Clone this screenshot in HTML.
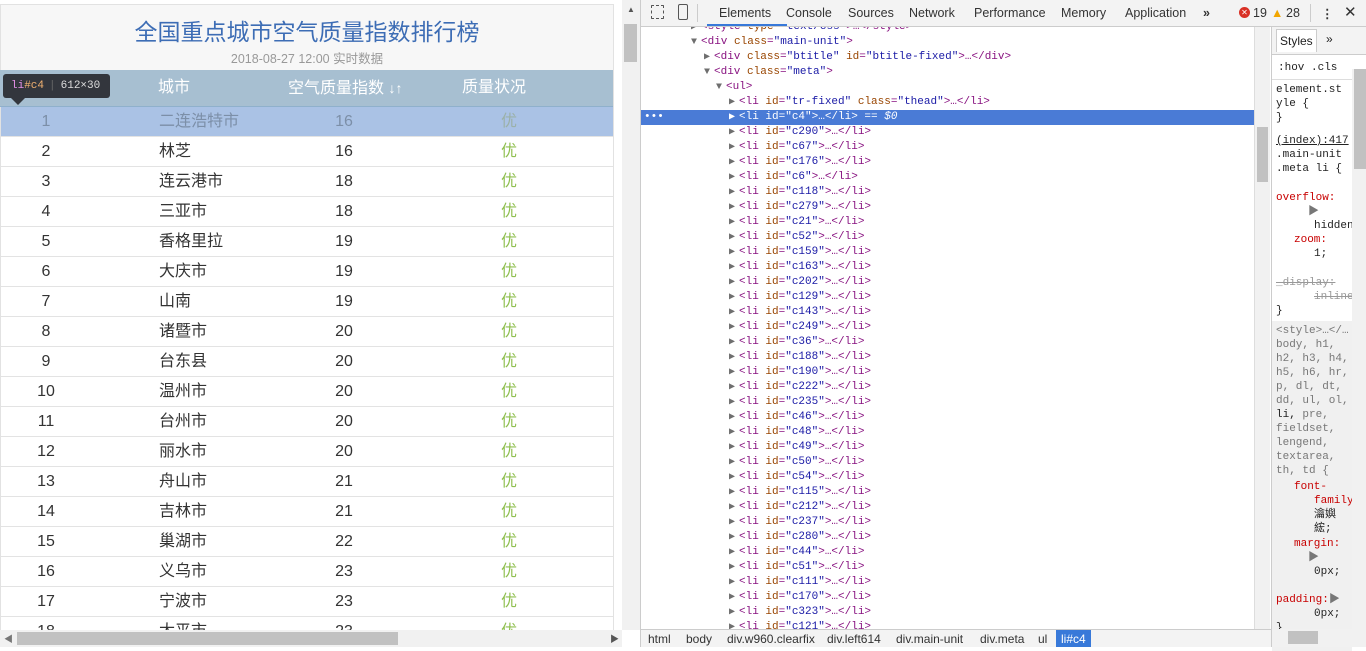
<!DOCTYPE html>
<html><head><meta charset="utf-8"><style>
*{margin:0;padding:0;box-sizing:border-box}
body{width:1366px;height:647px;overflow:hidden;background:#fff;font-family:"Liberation Sans","Noto Sans CJK SC",sans-serif;position:relative}
.abs{position:absolute}
#page{left:0;top:0;width:622px;height:630px;overflow:hidden;background:#fff}
#card{left:0;top:4px;width:614px;height:640px;border:1px solid #e2e2e2;background:#f7f7f7}
.title{left:0;top:14px;width:614px;text-align:center;color:#3d6db5;font-size:23px;line-height:36px}
.sub{left:0;top:50px;width:614px;text-align:center;color:#999;font-size:12.5px;line-height:18px}
.thead{left:0;top:70px;width:613px;height:37px;background:#a7bfd1;color:#fff;font-size:16px;border-bottom:1px solid #8fb0cc}
.row{left:1px;width:612px;height:30px;background:#fff;border-bottom:1px solid #e3e3e3;font-size:16px;color:#333}
.row span{position:absolute;top:0;line-height:30px;white-space:nowrap}
.thead span{position:absolute;top:0;line-height:36px;white-space:nowrap}
.c1{left:30px;width:30px;text-align:center}
.c2{left:158px}
.c3{left:320px;width:46px;text-align:center}
.c4{left:500px;color:#8fbf4f}
.hl{background:#aac2e5;color:#7c8fa8}
.hl .c4{color:#9bb1a8}
.tip{left:3px;top:74px;width:107px;height:24px;background:#33363d;border-radius:3px;color:#ddd;font:11px "Liberation Mono",monospace;line-height:24px;white-space:nowrap}
.tip:after{content:"";position:absolute;left:8px;top:24px;border:7px solid transparent;border-top:7px solid #33363d}
#vs{left:622px;top:0;width:18px;height:630px;background:#f1f1f1}
#hs{left:0;top:630px;width:622px;height:17px;background:#f1f1f1}
#dt{left:640px;top:0;width:726px;height:647px;background:#fff;border-left:1px solid #ccc}
.tb{left:0;top:0;width:726px;height:27px;background:#f3f3f3;border-bottom:1px solid #ccc;font-size:12.5px;color:#333}
.tb span{position:absolute;top:6px}
.tree{left:0;top:27px;width:613px;height:602px;overflow:hidden;font:11px "Liberation Mono","DejaVu Sans Mono",monospace;color:#881280}
.ln{position:absolute;height:15px;line-height:15px;white-space:pre}
.an{color:#994500}.av{color:#1a1aa6}
.tri{color:#6e6e6e;font-size:10px;display:inline-block;width:10px}
.sel{background:#4a7bd6;left:0;width:613px;color:#fff}
.sel .an,.sel .av{color:#fff}
.crumb{left:0;top:629px;width:630px;height:18px;background:#f3f3f3;border-top:1px solid #ccc;font-size:12px;color:#333}
.crumb span{position:absolute;top:2px}
.styles{left:630px;top:27px;width:96px;height:620px;background:#fff;border-left:1px solid #ccc;font:11px "Liberation Mono","Noto Sans CJK SC",monospace;color:#222}
.styles .ln{height:14px;line-height:14px}
.red{color:#c80000}
</style></head><body>
<div id="page" class="abs">
 <div id="card" class="abs"></div>
 <div class="abs title">全国重点城市空气质量指数排行榜</div>
 <div class="abs sub">2018-08-27 12:00 实时数据</div>
 <div class="abs thead"><span class="c2">城市</span><span style="left:288px">空气质量指数 <b style="font-size:14px">↓↑</b></span><span style="left:462px">质量状况</span></div>
 <div class="abs row hl" style="top:107px"><span class="c1">1</span><span class="c2">二连浩特市</span><span class="c3">16</span><span class="c4">优</span></div>
 <div class="abs row" style="top:137px"><span class="c1">2</span><span class="c2">林芝</span><span class="c3">16</span><span class="c4">优</span></div>
 <div class="abs row" style="top:167px"><span class="c1">3</span><span class="c2">连云港市</span><span class="c3">18</span><span class="c4">优</span></div>
 <div class="abs row" style="top:197px"><span class="c1">4</span><span class="c2">三亚市</span><span class="c3">18</span><span class="c4">优</span></div>
 <div class="abs row" style="top:227px"><span class="c1">5</span><span class="c2">香格里拉</span><span class="c3">19</span><span class="c4">优</span></div>
 <div class="abs row" style="top:257px"><span class="c1">6</span><span class="c2">大庆市</span><span class="c3">19</span><span class="c4">优</span></div>
 <div class="abs row" style="top:287px"><span class="c1">7</span><span class="c2">山南</span><span class="c3">19</span><span class="c4">优</span></div>
 <div class="abs row" style="top:317px"><span class="c1">8</span><span class="c2">诸暨市</span><span class="c3">20</span><span class="c4">优</span></div>
 <div class="abs row" style="top:347px"><span class="c1">9</span><span class="c2">台东县</span><span class="c3">20</span><span class="c4">优</span></div>
 <div class="abs row" style="top:377px"><span class="c1">10</span><span class="c2">温州市</span><span class="c3">20</span><span class="c4">优</span></div>
 <div class="abs row" style="top:407px"><span class="c1">11</span><span class="c2">台州市</span><span class="c3">20</span><span class="c4">优</span></div>
 <div class="abs row" style="top:437px"><span class="c1">12</span><span class="c2">丽水市</span><span class="c3">20</span><span class="c4">优</span></div>
 <div class="abs row" style="top:467px"><span class="c1">13</span><span class="c2">舟山市</span><span class="c3">21</span><span class="c4">优</span></div>
 <div class="abs row" style="top:497px"><span class="c1">14</span><span class="c2">吉林市</span><span class="c3">21</span><span class="c4">优</span></div>
 <div class="abs row" style="top:527px"><span class="c1">15</span><span class="c2">巢湖市</span><span class="c3">22</span><span class="c4">优</span></div>
 <div class="abs row" style="top:557px"><span class="c1">16</span><span class="c2">义乌市</span><span class="c3">23</span><span class="c4">优</span></div>
 <div class="abs row" style="top:587px"><span class="c1">17</span><span class="c2">宁波市</span><span class="c3">23</span><span class="c4">优</span></div>
 <div class="abs row" style="top:617px"><span class="c1">18</span><span class="c2">太平市</span><span class="c3">23</span><span class="c4">优</span></div>
 <div class="abs tip"><span style="color:#e38fe8;margin-left:8px">li</span><span style="color:#f0b070">#c4</span><span style="color:#666;margin:0 5px">|</span>612×30</div>
</div>
<div id="vs" class="abs"><div class="abs" style="left:2px;top:24px;width:13px;height:38px;background:#c1c1c1"></div><div class="abs" style="left:5px;top:5px;font-size:8px;color:#555">▲</div></div>
<div id="hs" class="abs"><div class="abs" style="left:17px;top:2px;width:381px;height:13px;background:#c1c1c1"></div><div class="abs" style="left:4px;top:2px;font-size:9px;color:#777">◀</div><div class="abs" style="left:610px;top:2px;font-size:9px;color:#555">▶</div></div>
<div id="dt" class="abs">
 <div class="abs tb">
  <span style="left:10px;top:5px;width:13px;height:14px;border:1.5px dashed #555;border-radius:1px"></span>
  <span style="left:37px;top:4px;width:10px;height:16px;border:1.5px solid #555;border-radius:2px"></span>
  <span style="left:56px;top:4px;height:18px;border-left:1px solid #ccc"></span>
  <span style="left:78px">Elements</span>
  <span style="left:66px;top:24px;width:80px;height:2px;background:#3879d9"></span>
  <span style="left:145px">Console</span>
  <span style="left:207px">Sources</span>
  <span style="left:268px">Network</span>
  <span style="left:333px">Performance</span>
  <span style="left:420px">Memory</span>
  <span style="left:484px">Application</span>
  <span style="left:562px;font-weight:bold">»</span>
  <span style="left:598px;top:7px;width:11px;height:11px;border-radius:50%;background:#d93025;color:#fff;font-size:8px;text-align:center;line-height:11px">✕</span>
  <span style="left:612px">19</span>
  <span style="left:630px;color:#f2a600">▲</span>
  <span style="left:645px">28</span>
  <span style="left:669px;top:4px;height:18px;border-left:1px solid #ccc"></span>
  <span style="left:680px;font-weight:bold">⋮</span>
  <span style="left:703px;font-size:15px;top:3px">✕</span>
 </div>
 <div class="abs tree">
  <div class="ln" style="top:-7px;left:50px"><span class="tri">▶</span>&lt;style <span class="an">type</span>=<span class="av">"text/css"</span>&gt;…&lt;/style&gt;</div>
  <div class="ln" style="top:8px;left:50px"><span class="tri">▼</span>&lt;div <span class="an">class</span>=<span class="av">"main-unit"</span>&gt;</div>
  <div class="ln" style="top:23px;left:63px"><span class="tri">▶</span>&lt;div <span class="an">class</span>=<span class="av">"btitle"</span> <span class="an">id</span>=<span class="av">"btitle-fixed"</span>&gt;…&lt;/div&gt;</div>
  <div class="ln" style="top:38px;left:63px"><span class="tri">▼</span>&lt;div <span class="an">class</span>=<span class="av">"meta"</span>&gt;</div>
  <div class="ln" style="top:53px;left:75px"><span class="tri">▼</span>&lt;ul&gt;</div>
  <div class="ln" style="top:68px;left:88px"><span class="tri">▶</span>&lt;li <span class="an">id</span>=<span class="av">"tr-fixed"</span> <span class="an">class</span>=<span class="av">"thead"</span>&gt;…&lt;/li&gt;</div>
  <div class="ln sel" style="top:83px"><span style="position:absolute;left:3px">•••</span><span style="position:absolute;left:88px"><span class="tri" style="color:#fff">▶</span>&lt;li <span class="an">id</span>=<span class="av">"c4"</span>&gt;…&lt;/li&gt; == <i>$0</i></span></div>
  <div id="lis"></div>
 </div>
 <div class="abs" style="left:613px;top:27px;width:16px;height:602px;background:#f1f1f1;border-left:1px solid #ddd"><div class="abs" style="left:2px;top:100px;width:11px;height:55px;background:#c1c1c1"></div></div>
 <div class="abs crumb"><span style="left:7px">html</span><span style="left:45px">body</span><span style="left:86px">div.w960.clearfix</span><span style="left:186px">div.left614</span><span style="left:255px">div.main-unit</span><span style="left:339px">div.meta</span><span style="left:397px">ul</span><span style="left:415px;top:0;height:17px;padding:2px 5px;background:#3879d9;color:#fff">li#c4</span></div>
 <div class="abs styles">
  <div class="abs" style="left:0;top:0;width:96px;height:28px;border-bottom:1px solid #ccc;background:#f3f3f3;font-family:'Liberation Sans';font-size:12px"><span class="abs" style="left:4px;top:2px;border:1px solid #ccc;border-bottom:none;background:#fff;padding:4px 3px">Styles</span><span class="abs" style="left:54px;top:5px">»</span></div>
  <div class="ln abs" style="left:6px;top:34px">:hov .cls</div>
  <div class="abs" style="left:0;top:52px;width:80px;border-top:1px solid #ddd"></div>
  <div class="ln abs" style="left:4px;top:56px">element.st</div>
  <div class="ln abs" style="left:4px;top:70px">yle {</div>
  <div class="ln abs" style="left:4px;top:84px">}</div>
  <div class="ln abs" style="left:4px;top:107px;text-decoration:underline">(index):417</div>
  <div class="ln abs" style="left:4px;top:121px">.main-unit</div>
  <div class="ln abs" style="left:4px;top:135px">.meta li {</div>
  <div class="ln abs red" style="left:4px;top:164px">overflow:</div>
  <div class="ln abs" style="left:36px;top:178px;color:#777">▶</div>
  <div class="ln abs" style="left:42px;top:192px">hidden</div>
  <div class="ln abs red" style="left:22px;top:206px">zoom:</div>
  <div class="ln abs" style="left:42px;top:220px">1;</div>
  <div class="ln abs" style="left:4px;top:249px;color:#999;text-decoration:line-through">_display:</div>
  <div class="ln abs" style="left:42px;top:263px;color:#999;text-decoration:line-through">inline</div>
  <div class="ln abs" style="left:4px;top:277px">}</div>
  <div class="abs" style="left:0;top:294px;width:80px;height:330px;background:#f0f0f0"></div>
  <div class="ln abs" style="left:4px;top:297px;color:#777">&lt;style&gt;…&lt;/…</div>
  <div class="ln abs" style="left:4px;top:311px;color:#777">body, h1,</div>
  <div class="ln abs" style="left:4px;top:325px;color:#777">h2, h3, h4,</div>
  <div class="ln abs" style="left:4px;top:339px;color:#777">h5, h6, hr,</div>
  <div class="ln abs" style="left:4px;top:353px;color:#777">p, dl, dt,</div>
  <div class="ln abs" style="left:4px;top:367px;color:#777">dd, ul, ol,</div>
  <div class="ln abs" style="left:4px;top:381px"><span>li,</span><span style="color:#777"> pre,</span></div>
  <div class="ln abs" style="left:4px;top:395px;color:#777">fieldset,</div>
  <div class="ln abs" style="left:4px;top:409px;color:#777">lengend,</div>
  <div class="ln abs" style="left:4px;top:423px;color:#777">textarea,</div>
  <div class="ln abs" style="left:4px;top:437px;color:#777">th, td {</div>
  <div class="ln abs red" style="left:22px;top:453px">font-</div>
  <div class="ln abs red" style="left:42px;top:467px">family</div>
  <div class="ln abs" style="left:42px;top:481px">瀹嬩</div>
  <div class="ln abs" style="left:42px;top:495px">綋;</div>
  <div class="ln abs red" style="left:22px;top:510px">margin:</div>
  <div class="ln abs" style="left:36px;top:524px;color:#777">▶</div>
  <div class="ln abs" style="left:42px;top:538px">0px;</div>
  <div class="ln abs red" style="left:4px;top:566px">padding:<span style="color:#777">▶</span></div>
  <div class="ln abs" style="left:42px;top:580px">0px;</div>
  <div class="ln abs" style="left:4px;top:594px">}</div>
  <div class="abs" style="left:80px;top:42px;width:16px;height:560px;background:#f1f1f1"><div class="abs" style="left:2px;top:0;width:12px;height:100px;background:#c1c1c1"></div></div>
  <div class="abs" style="left:0;top:602px;width:96px;height:18px;background:#f1f1f1"><div class="abs" style="left:16px;top:2px;width:30px;height:13px;background:#c1c1c1"></div></div>
 </div>
</div>
<script>
var ids=["c290","c67","c176","c6","c118","c279","c21","c52","c159","c163","c202","c129","c143","c249","c36","c188","c190","c222","c235","c46","c48","c49","c50","c54","c115","c212","c237","c280","c44","c51","c111","c170","c323","c121"];
var h="";ids.forEach(function(id,i){h+='<div class="ln" style="top:'+(98+15*i)+'px;left:88px"><span class="tri">▶</span>&lt;li <span class="an">id</span>=<span class="av">"'+id+'"</span>&gt;…&lt;/li&gt;</div>';});
document.getElementById("lis").outerHTML=h;
</script>
</body></html>
